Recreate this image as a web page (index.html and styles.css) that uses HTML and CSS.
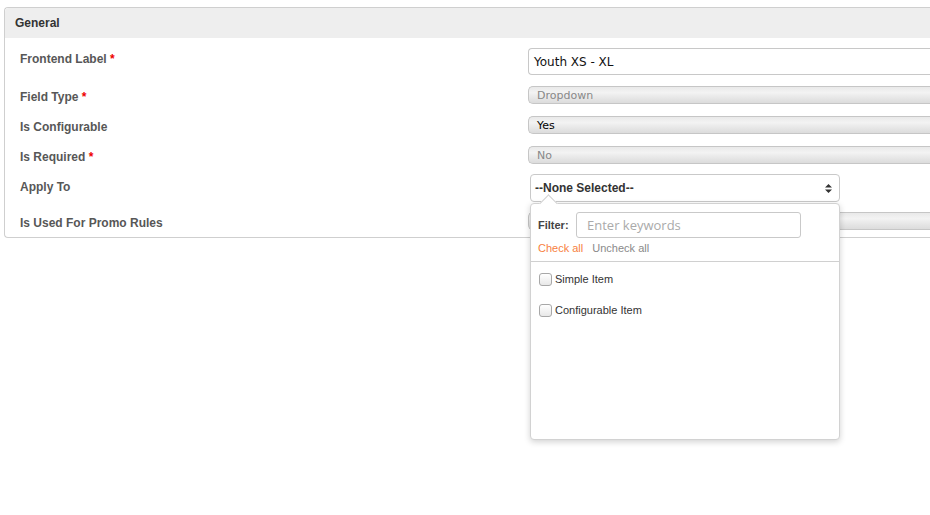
FILE: index.html
```html
<!DOCTYPE html>
<html>
<head>
<meta charset="utf-8">
<link rel="stylesheet" href="styles.css">
</head>
<body>
<div class="panel">
  <div class="panel-head">General</div>
  <div class="panel-body">
    <div class="row r1">
      <div class="label">Frontend Label <span class="req">*</span></div>
      <div class="value"><div class="text-input">Youth XS - XL</div></div>
    </div>
    <div class="row r2">
      <div class="label">Field Type <span class="req">*</span></div>
      <div class="value"><div class="mac-select dim">Dropdown</div></div>
    </div>
    <div class="row r2">
      <div class="label">Is Configurable</div>
      <div class="value"><div class="mac-select">Yes</div></div>
    </div>
    <div class="row r4">
      <div class="label">Is Required <span class="req">*</span></div>
      <div class="value"><div class="mac-select dim">No</div></div>
    </div>
    <div class="row r5">
      <div class="label lab-apply">Apply To</div>
      <div class="value">
        <div class="ms-wrap">
          <div class="ms-button">
            <span>--None Selected--</span>
            <svg class="ms-arrows" width="7" height="9" viewBox="0 0 7 9"><path d="M3.5 0 L7 3.5 H0 Z M0 5.5 H7 L3.5 9 Z" fill="#333"/></svg>
          </div>
          <div class="ms-menu">
            <div class="ms-caret"></div>
            <div class="ms-filter">
              <span class="ms-filter-label">Filter:</span>
              <div class="ms-filter-input">Enter keywords</div>
            </div>
            <div class="ms-links">
              <span class="check-all">Check all</span>
              <span class="uncheck-all">Uncheck all</span>
            </div>
            <ul class="ms-list">
              <li><span class="cb"></span>Simple Item</li>
              <li><span class="cb"></span>Configurable Item</li>
            </ul>
          </div>
        </div>
      </div>
    </div>
    <div class="row r6">
      <div class="label">Is Used For Promo Rules</div>
      <div class="value"><div class="mac-select dim">&nbsp;</div></div>
    </div>
  </div>
</div>
</body>
</html>
```
FILE: styles.css
```css
html, body {
  margin: 0;
  padding: 0;
  background: #fff;
  overflow: hidden;
  width: 930px;
  height: 515px;
}
body {
  font-family: "Liberation Sans", Arial, sans-serif;
  font-size: 12px;
  color: #333;
}
.panel {
  margin: 7px 0 0 4px;
  width: 926px;
  border: 1px solid #cfcfcf;
  border-right: none;
  border-radius: 4px 0 0 4px;
  box-sizing: border-box;
}
.panel-head {
  height: 30px;
  line-height: 31px;
  background: #eeeeee;
  padding-left: 10px;
  font-weight: bold;
  color: #333;
  border-radius: 4px 0 0 0;
}
.panel-body {
  padding: 10px 0 7px 15px;
}
.row {
  display: flex;
  align-items: flex-start;
}
.r1 { height: 38px; }
.r2 { height: 30px; }
.r4 { height: 28px; }
.r5 { height: 38px; }
.r6 { height: 18px; }
.label {
  width: 508px;
  flex: none;
  font-weight: bold;
  color: #575757;
  line-height: 20px;
  padding-top: 1px;
}
.lab-apply { padding-top: 3px; }
.req { color: #e00; }
.value {
  flex: 1;
}
.text-input {
  height: 27px;
  box-sizing: border-box;
  border: 1px solid #c8c8c8;
  border-radius: 4px 0 0 4px;
  border-right: none;
  padding-left: 5px;
  line-height: 26px;
  font-family: "DejaVu Sans", sans-serif;
  font-size: 12px;
  color: #111;
}
.mac-select {
  height: 18px;
  box-sizing: border-box;
  border: 1px solid #c6c6c6;
  border-right: none;
  border-radius: 5px 0 0 5px;
  background: linear-gradient(#e9e9e9, #f3f3f3 35%, #e6e6e6 70%, #dcdcdc);
  padding-left: 8px;
  line-height: 17px;
  font-family: "DejaVu Sans", sans-serif;
  font-size: 11px;
  color: #000;
}
.mac-select.dim { color: #888; }
.ms-wrap {
  position: relative;
  width: 310px;
  margin-left: 2px;
}
.ms-button {
  height: 28px;
  box-sizing: border-box;
  border: 1px solid #c9c9c9;
  border-radius: 4px;
  background: #fff;
  display: flex;
  align-items: center;
  justify-content: space-between;
  padding: 0 7px 0 4px;
  font-weight: bold;
  color: #333;
}
.ms-arrows { display: block; }
.ms-menu {
  position: absolute;
  left: 0;
  top: 29px;
  width: 310px;
  height: 237px;
  box-sizing: border-box;
  background: #fff;
  border: 1px solid #d2d2d2;
  border-radius: 4px;
  box-shadow: 0 2px 6px rgba(0, 0, 0, 0.18);
  z-index: 5;
}
.ms-caret {
  position: absolute;
  left: 11px;
  top: -7px;
  width: 12px;
  height: 12px;
  background: #fff;
  border-left: 1px solid #d2d2d2;
  border-top: 1px solid #d2d2d2;
  transform: rotate(45deg);
}
.ms-filter {
  position: relative;
  display: flex;
  align-items: center;
  padding: 8px 0 0 7px;
}
.ms-filter-label {
  font-weight: bold;
  color: #444;
  font-size: 11px;
  width: 38px;
}
.ms-filter-input {
  width: 225px;
  height: 26px;
  box-sizing: border-box;
  border: 1px solid #c9c9c9;
  border-radius: 3px;
  padding-left: 10px;
  line-height: 24px;
  font-family: "Open Sans", "DejaVu Sans", sans-serif;
  font-size: 13px;
  color: #aaa;
}
.ms-links {
  padding: 2px 0 0 7px;
  font-size: 11px;
  line-height: 16px;
  height: 21px;
  border-bottom: 1px solid #d0d0d0;
}
.check-all { color: #f7813f; margin-right: 6px; }
.uncheck-all { color: #8a8a8a; }
.ms-list {
  list-style: none;
  margin: 0;
  padding: 10px 0 0 8px;
  font-size: 11px;
  color: #333;
}
.ms-list li {
  display: flex;
  align-items: center;
  height: 14px;
  margin-bottom: 17px;
}
.cb {
  width: 11px;
  height: 11px;
  border: 1px solid #a8a8a8;
  border-radius: 3px;
  background: linear-gradient(#fff, #e8e8e8);
  margin-right: 3px;
  flex: none;
}
```
